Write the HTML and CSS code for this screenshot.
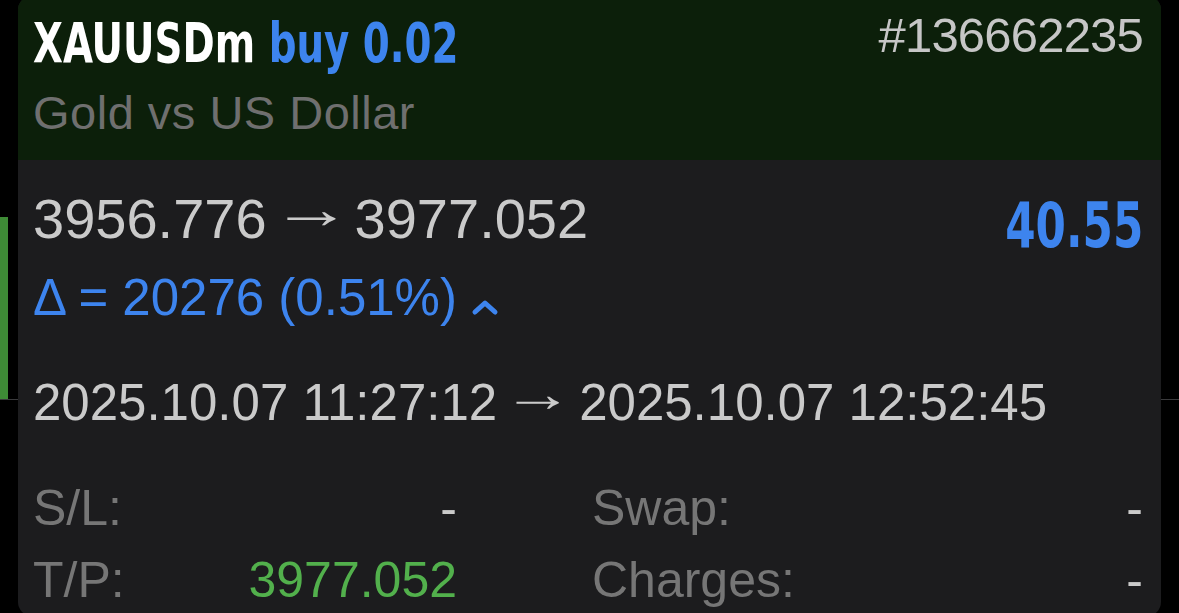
FILE: index.html
```html
<!DOCTYPE html>
<html lang="en">
<head>
  <meta charset="UTF-8" />
  <meta name="viewport" content="width=device-width, initial-scale=1" />
  <title>XAUUSDm position</title>
  <link rel="stylesheet" href="styles.css">
</head>
<body>
  <div class="screen">
    <div class="side side-left">
      <div class="side-bar"></div>
      <div class="side-line"></div>
    </div>

    <div class="card">
      <div class="card-head">
        <div class="head-row">
          <div class="title">XAUUSDm <span class="title-side">buy 0.02</span></div>
          <div class="ticket">#136662235</div>
        </div>
        <div class="subtitle">Gold vs US Dollar</div>
      </div>

      <div class="card-body">
        <div class="price-row">
          <div class="price-col">
            <div class="prices">3956.776<span class="arrow">&rarr;</span>3977.052</div>
            <div class="delta">&Delta; = 20276 (0.51%)<svg class="chevron" width="28" height="18" viewBox="0 0 28 18"><path d="M4 14 L14 5 L24 14" fill="none" stroke="#3d84ee" stroke-width="5" stroke-linecap="round" stroke-linejoin="round"/></svg></div>
          </div>
          <div class="profit">40.55</div>
        </div>

        <div class="dates">2025.10.07 11:27:12<span class="arrow">&rarr;</span>2025.10.07 12:52:45</div>

        <div class="details">
          <div class="detail"><span class="label">S/L:</span><span class="value">-</span></div>
          <div class="detail"><span class="label">Swap:</span><span class="value">-</span></div>
          <div class="detail"><span class="label">T/P:</span><span class="value green">3977.052</span></div>
          <div class="detail"><span class="label">Charges:</span><span class="value">-</span></div>
        </div>
      </div>
    </div>

    <div class="side side-right">
      <div class="side-line"></div>
    </div>
  </div>
</body>
</html>
```

FILE: styles.css
```css
body {
  margin: 0;
  background: #000;
  font-family: "Liberation Sans", Arial, sans-serif;
  overflow: hidden;
}

.screen {
  display: grid;
  grid-template-columns: 18px 1143px 18px;
  height: 613px;
}

.side {
  display: flex;
  flex-direction: column;
}

.side-left {
  padding-top: 217px;
}

.side-bar {
  width: 8px;
  height: 182px;
  background: #3e8b36;
}

.side-line {
  height: 1px;
  background: #3a3a3c;
}

.side-right {
  padding-top: 399px;
}

.card {
  margin-top: -4px;
  height: 620px;
  border-radius: 14px;
  overflow: hidden;
  background: #1c1c1e;
}

.card-head {
  background: #0c1f0a;
  padding: 11px 18px 20px 15px;
  height: 133px;
}

.head-row {
  display: flex;
  justify-content: space-between;
  align-items: flex-start;
}

/* condensed bold face, squeezed to match the app's narrow font */
.title {
  margin-top: 4px;
  font-family: "DejaVu Sans Condensed", "DejaVu Sans", sans-serif;
  font-weight: bold;
  font-size: 56px;
  line-height: 64px;
  color: #fff;
  transform: scaleX(0.77);
  transform-origin: left center;
  white-space: nowrap;
}

.title-side {
  color: #3d84ee;
}

.ticket {
  font-size: 49px;
  line-height: 56px;
  letter-spacing: -0.8px;
  color: #c6c6c6;
}

.subtitle {
  margin-top: 11px;
  font-size: 47px;
  line-height: 54px;
  letter-spacing: 0.5px;
  color: #6f6f6f;
}

.card-body {
  padding: 27px 18px 0 15px;
}

.price-row {
  display: flex;
  justify-content: space-between;
  align-items: flex-start;
}

.prices {
  font-size: 56px;
  line-height: 64px;
  color: #cacaca;
  white-space: nowrap;
}

/* long thin arrow between the two values */
.arrow {
  display: inline-flex;
  justify-content: center;
  width: 40px;
  margin: 0 24px;
  transform: translateY(-0.17em) scaleX(1.45);
}

.dates .arrow {
  width: 36px;
  margin: 0 23px;
  transform: translateY(-0.17em) scaleX(1.4);
}

.delta {
  margin-top: 18px;
  font-size: 51px;
  line-height: 58px;
  color: #3d84ee;
}

.chevron {
  margin-left: 14px;
  vertical-align: -1px;
}

.profit {
  margin-top: 7px;
  font-family: "DejaVu Sans Condensed", "DejaVu Sans", sans-serif;
  font-weight: bold;
  font-size: 63px;
  line-height: 64px;
  color: #3d84ee;
  transform: scaleX(0.77);
  transform-origin: right center;
}

.dates {
  margin-top: 47px;
  font-size: 51px;
  line-height: 58px;
  color: #cacaca;
  white-space: nowrap;
}

.details {
  margin-top: 40px;
  display: grid;
  grid-template-columns: 424px 1fr;
  column-gap: 135px;
}

.detail {
  display: flex;
  justify-content: space-between;
  font-size: 50px;
  line-height: 72px;
}

.label {
  color: #767676;
}

.value {
  color: #cacaca;
}

.value.green {
  color: #52b04c;
}
```
